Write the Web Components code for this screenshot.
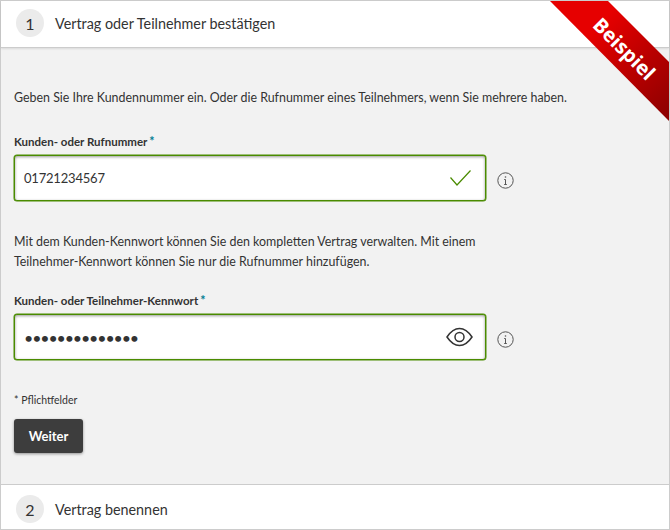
<!DOCTYPE html>
<html lang="de">
<head>
<meta charset="utf-8">
<title>Vertrag</title>
<style>
  html, body { margin: 0; height: 100%; }
  body { font-family: Lato, "Open Sans", sans-serif; color: #333; background: #fff; }
</style>
</head>
<body>
<step-form>
  <step-header slot="top" number="1">Vertrag oder Teilnehmer bestätigen</step-header>
  <step-header slot="bottom" number="2">Vertrag benennen</step-header>
</step-form>

<script>
function tpl(html) {
  const t = document.createElement("template");
  t.innerHTML = html;
  return t;
}

const headerTpl = tpl(`
<style>
  :host { display: flex; align-items: center; gap: 11px; box-sizing: border-box; height: 46px; padding-left: 15px; padding-bottom: 2px; background: #fff; font-size: 14.35px; color: #333; }
  :host([slot="bottom"]) { height: 44px; padding-top: 4px; padding-bottom: 0; }
  #num { width: 28px; height: 28px; border-radius: 50%; background: #ebebeb; display: flex; align-items: center; justify-content: center; font-size: 16px; }
</style>
<div id="num"></div>
<slot></slot>
`);
class StepHeader extends HTMLElement {
  constructor() {
    super();
    this.attachShadow({ mode: "open" });
    this.shadowRoot.appendChild(headerTpl.content.cloneNode(true));
    this.shadowRoot.getElementById("num").textContent = this.getAttribute("number");
  }
}
customElements.define("step-header", StepHeader);

const fieldTpl = tpl(`
<style>
  :host { display: block; }
  label { display: flex; gap: 2px; font-size: 11.5px; font-weight: 700; color: #333; line-height: 14px; margin-bottom: 6px; }
  label span { color: #007c92; font-size: 12.5px; }
  #row { display: flex; align-items: center; gap: 11px; }
  #box { width: 470px; height: 44px; border: 1px solid #4a8b00; border-radius: 3px; background: #fff; display: flex; align-items: center; justify-content: space-between; box-shadow: 0 0 0 .5px #4a8b00, inset 0 1px 3px rgba(0,0,0,.4); }
  #value { padding-left: 9px; font-size: 13px; letter-spacing: -.2px; color: #333; }
  #icon { display: flex; margin-right: 14px; }
  #info { position: relative; top: 2px; }
</style>
<label><slot name="label"></slot><span>*</span></label>
<div id="row">
  <div id="box">
    <div id="value"><slot name="value"></slot></div>
    <div id="icon"><slot name="icon"></slot></div>
  </div>
  <svg id="info" width="17" height="17" viewBox="0 0 17 17" fill="none" stroke="#555">
    <circle cx="8.500" cy="8.500" r="7.700"/>
    <path d="M8.500 7.500v5M7.200 7.500h1.300M7.200 12.500h2.600" stroke-width="1"/>
    <circle cx="8.500" cy="5" r=".8" fill="#555" stroke="none"/>
  </svg>
</div>
`);
class FormField extends HTMLElement {
  constructor() {
    super();
    this.attachShadow({ mode: "open" });
    this.shadowRoot.appendChild(fieldTpl.content.cloneNode(true));
  }
}
customElements.define("form-field", FormField);

const ribbonTpl = tpl(`
<style>
  :host { position: absolute; top: 0; right: 0; width: 119px; height: 120px; overflow: hidden; pointer-events: none; z-index: 2; }
  #band { position: absolute; inset: 0; clip-path: polygon(0 0, 58px 0, 119px 61px, 119px 120px); background: linear-gradient(135deg, #e60000 30%, #8a0000 100%); }
  #text { position: absolute; left: 32px; top: 36px; width: 84px; text-align: center; transform: rotate(45deg); color: #fff; font: 700 20px/24px "Open Sans", sans-serif; }
</style>
<div id="band"></div>
<div id="text"><slot></slot></div>
`);
class CornerRibbon extends HTMLElement {
  constructor() {
    super();
    this.attachShadow({ mode: "open" });
    this.shadowRoot.appendChild(ribbonTpl.content.cloneNode(true));
  }
}
customElements.define("corner-ribbon", CornerRibbon);

const btnTpl = tpl(`
<style>
  :host { display: inline-flex; align-items: center; justify-content: center; width: 69px; height: 34px; border-radius: 3px; background: #3d3d3d; color: #fff; font-size: 13px; font-weight: 700; box-shadow: 0 1px 3px rgba(0,0,0,.4); }
</style>
<slot></slot>
`);
class PrimaryButton extends HTMLElement {
  constructor() {
    super();
    this.attachShadow({ mode: "open" });
    this.shadowRoot.appendChild(btnTpl.content.cloneNode(true));
  }
}
customElements.define("primary-button", PrimaryButton);

const formTpl = tpl(`
<style>
  :host { display: flex; flex-direction: column; position: relative; box-sizing: border-box; height: 530px; border: 1px solid #ccc; font-size: 12.42px; color: #333; }
  #top { border-bottom: 1px solid #ccc; box-shadow: 0 1px 2px rgba(0,0,0,.1); z-index: 1; }
  #main { flex: 1; background: #f2f2f2; padding: 40px 13px 0; display: flex; flex-direction: column; }
  #bottom { border-top: 1px solid #ccc; }
  p { margin: 0; line-height: 20px; }
  form-field.first { margin-top: 27px; }
  p.second { margin-top: 31px; }
  form-field.last { margin-top: 22px; }
  #req { margin-top: 33px; font-size: 10.5px; line-height: 14px; }
  primary-button { margin-top: 12px; align-self: flex-start; }
  #pw { letter-spacing: -1.14px; font-size: 16px; }
</style>
<div id="top"><slot name="top"></slot></div>
<div id="main">
  <p>Geben Sie Ihre Kundennummer ein. Oder die Rufnummer eines Teilnehmers, wenn Sie mehrere haben.</p>
  <form-field class="first">
    <span slot="label">Kunden- oder Rufnummer</span>
    <span slot="value">01721234567</span>
    <svg slot="icon" width="21" height="16" viewBox="0 0 21 16" fill="none" stroke="#4a8b00" stroke-width="1.200"><path d="M.5 7.500l6.500 7.500L20.500 .5"/></svg>
  </form-field>
  <p class="second">Mit dem Kunden-Kennwort können Sie den kompletten Vertrag verwalten. Mit einem<br>Teilnehmer-Kennwort können Sie nur die Rufnummer hinzufügen.</p>
  <form-field class="last">
    <span slot="label">Kunden- oder Teilnehmer-Kennwort</span>
    <span slot="value" id="pw">••••••••••••••</span>
    <svg slot="icon" width="27" height="20" viewBox="0 0 27 20" fill="none" stroke="#333" stroke-width="1.500" style="margin-right:-2px"><path d="M1 10C5 4 9 1.500 13.500 1.500S22 4 26 10c-4 6-8 8.500-12.500 8.500S5 16 1 10z"/><circle cx="13.500" cy="10" r="4.500"/></svg>
  </form-field>
  <div id="req">* Pflichtfelder</div>
  <primary-button>Weiter</primary-button>
</div>
<div id="bottom"><slot name="bottom"></slot></div>
<corner-ribbon>Beispiel</corner-ribbon>
`);
class StepForm extends HTMLElement {
  constructor() {
    super();
    this.attachShadow({ mode: "open" });
    this.shadowRoot.appendChild(formTpl.content.cloneNode(true));
  }
}
customElements.define("step-form", StepForm);
</script>
</body>
</html>
